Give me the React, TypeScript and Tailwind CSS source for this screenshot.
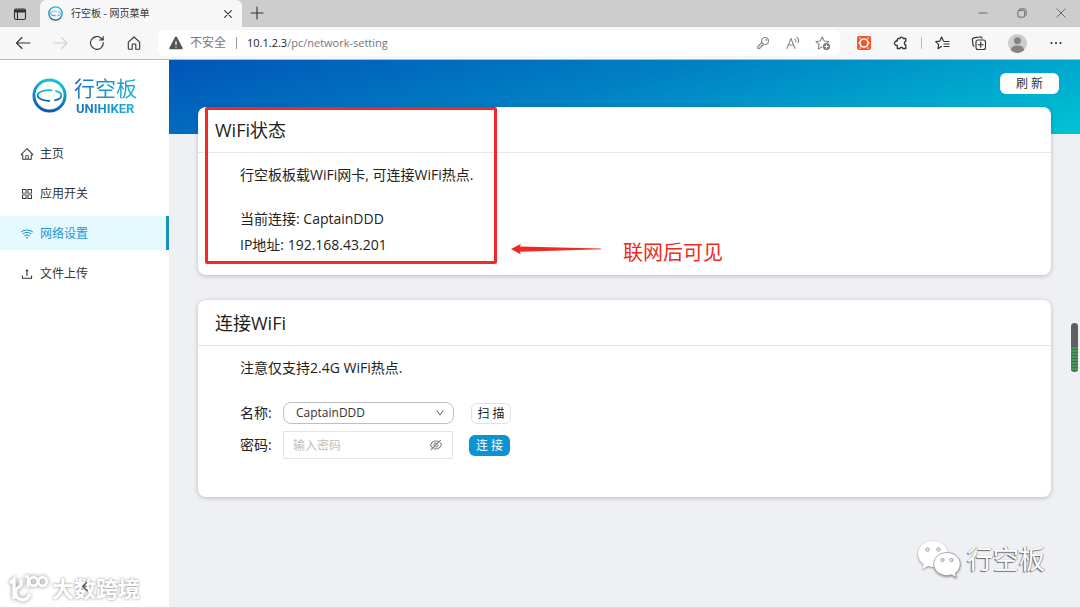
import type { ReactNode } from 'react';
import {
  AiOutlineAppstore,
  AiOutlineDown,
  AiOutlineEyeInvisible,
  AiOutlineHome,
  AiOutlineUpload,
  AiOutlineWifi,
} from 'react-icons/ai';

const menu = [
  { label: '主页', Icon: AiOutlineHome, active: false },
  { label: '应用开关', Icon: AiOutlineAppstore, active: false },
  { label: '网络设置', Icon: AiOutlineWifi, active: true },
  { label: '文件上传', Icon: AiOutlineUpload, active: false },
];

function Stroke({ children, className = 'size-4' }: { children: ReactNode; className?: string }) {
  return (
    <svg
      viewBox="0 0 16 16"
      className={className}
      fill="none"
      stroke="currentColor"
      strokeWidth="1.1"
      strokeLinecap="round"
      strokeLinejoin="round"
      aria-hidden="true"
    >
      {children}
    </svg>
  );
}

function IconButton({ label, className = '', children }: { label: string; className?: string; children: ReactNode }) {
  return (
    <button type="button" aria-label={label} className={`shrink-0 ${className}`}>
      {children}
    </button>
  );
}

function LogoMark({ id, className }: { id: string; className: string }) {
  return (
    <svg viewBox="0 0 36 36" className={className} fill="none" aria-hidden="true">
      <defs>
        <linearGradient id={id} x1="0.6" y1="0" x2="0.4" y2="1">
          <stop offset="0" stopColor="#13c5d6" />
          <stop offset="1" stopColor="#0d57b5" />
        </linearGradient>
      </defs>
      <circle cx="18" cy="18" r="16" stroke={`url(#${id})`} strokeWidth="3" />
      <path
        d="M21 12.600C13 11.500 5.500 14.500 5.800 18c.3 3.600 6.500 5.600 12.700 5.400M24 13.300c4 .9 6.500 2.700 6.200 5-.2 2-3.200 3.900-7.200 4.700"
        stroke={`url(#${id})`}
        strokeWidth="1.8"
      />
    </svg>
  );
}

function TitleBar() {
  return (
    <div className="flex h-[27px] items-end bg-[#cdcdcd] text-[#333]">
      <IconButton label="标签页操作" className="mb-[5px] ml-3">
        <Stroke>
          <rect x="2.500" y="3" width="11" height="10.500" rx="1.500" />
          <path d="M3 4.500h10M3 5.500h10" strokeWidth="2" />
          <path d="M5.500 6v7" />
        </Stroke>
      </IconButton>
      <div className="ml-3 flex h-[27px] w-[202px] items-center rounded-t-md bg-[#f7f7f7] pr-2 pl-2">
        <LogoMark id="tab-logo" className="size-[15px]" />
        <span className="ml-2 flex-1 text-[10px]">行空板 - 网页菜单</span>
        <IconButton label="关闭标签页">
          <Stroke className="size-3">
            <path d="M3.500 3.500l9 9M12.500 3.500l-9 9" strokeWidth="1.500" />
          </Stroke>
        </IconButton>
      </div>
      <IconButton label="新建标签页" className="mb-[6px] ml-[7px]">
        <Stroke>
          <path d="M8 2v12M2 8h12" />
        </Stroke>
      </IconButton>
      <div className="mb-2 ml-auto flex gap-[27px] pr-[13px] text-[#555]">
        <IconButton label="最小化">
          <Stroke className="size-3">
            <path d="M2.500 8h11" />
          </Stroke>
        </IconButton>
        <IconButton label="还原">
          <Stroke className="size-3">
            <rect x="2.500" y="4.500" width="9" height="9" rx="1.500" />
            <path d="M5 2.500h6a2.500 2.500 0 0 1 2.500 2.500v6" />
          </Stroke>
        </IconButton>
        <IconButton label="关闭">
          <Stroke className="size-3">
            <path d="M2.500 2.500l11 11M13.500 2.500l-11 11" />
          </Stroke>
        </IconButton>
      </div>
    </div>
  );
}

function Toolbar() {
  return (
    <div className="flex h-[33px] items-center border-b border-[#b5b9bd] bg-[#f7f7f7] pr-4 pl-[15px] text-[#333]">
      <div className="flex gap-[21px]">
        <IconButton label="后退">
          <Stroke>
            <path d="M15 8H1.500M7 2.500L1.500 8l5.500 5.500" />
          </Stroke>
        </IconButton>
        <IconButton label="前进" className="text-[#d0d0d0]">
          <Stroke>
            <path d="M1.500 8H15M9.500 2.500L15 8l-5.500 5.500" />
          </Stroke>
        </IconButton>
        <IconButton label="刷新页面">
          <Stroke>
            <path d="M14.300 7.500A6.400 6.400 0 1 1 12.500 3.500L14 5M14.200 1.500V5h-3.700" />
          </Stroke>
        </IconButton>
        <IconButton label="主页">
          <Stroke>
            <path d="M2.300 7.200L8 2l5.700 5.200v6.300a.8.8 0 0 1-.8.8H9.800V9.800a.8.800 0 0 0-.8-.8H7a.8.800 0 0 0-.8.800v4.500H3.100a.8.800 0 0 1-.8-.8z" />
          </Stroke>
        </IconButton>
      </div>

      <div className="ml-4 flex h-[26px] flex-1 items-center rounded-md bg-white pr-[9px] pl-2.5">
        <svg viewBox="0 0 16 16" className="size-4 text-[#555]" aria-hidden="true">
          <path d="M8 1.600a1 1 0 0 1 .9.500l5.700 10.600a1 1 0 0 1-.9 1.500H2.300a1 1 0 0 1-.9-1.500L7.100 2.100a1 1 0 0 1 .9-.5z" fill="currentColor" />
          <path d="M8 6v4M8 11.400v1.200" stroke="#fff" strokeWidth="1.200" />
        </svg>
        <span className="ml-1.5 text-xs text-[#777]">不安全</span>
        <span className="mx-2.5 h-3 w-px bg-[#999]" />
        <span className="flex-1 text-[11px] text-[#777]">
          <span className="text-[#222]">10.1.2.3</span>/pc/network-setting
        </span>
        <div className="flex gap-[14px] text-[#888]">
          <IconButton label="密码">
            <Stroke className="size-4">
              <circle cx="10" cy="6" r="3.500" />
              <circle cx="11.200" cy="4.900" r=".4" />
              <path d="M6.800 7.500L2.800 11.500v2h2.100v-1.500h1.500v-1.400h1.200l1-1.300" />
            </Stroke>
          </IconButton>
          <IconButton label="朗读">
            <Stroke>
              <path d="M2 13.500L6 3.500l4 10M3.400 10h5.200M10 4.200c.8.700 1 1.600.7 2.600M12 2.300c1.800 1.500 2 3.500 1.200 5.500" />
            </Stroke>
          </IconButton>
          <IconButton label="收藏">
            <Stroke>
              <path d="M7 12l-3.600 2 .7-4.300L1 6.600l4.300-.6L7.200 2l2 4 4.300.6-1 1" />
              <circle cx="11.500" cy="11.500" r="3.600" fill="#777" stroke="none" />
              <path d="M11.500 9.800v3.400M9.800 11.500h3.400" stroke="#fff" strokeWidth="1" />
            </Stroke>
          </IconButton>
        </div>
      </div>

      <div className="ml-4 flex items-center gap-[21px]">
        <IconButton label="扩展">
          <svg viewBox="0 0 16 16" className="size-4" fill="none" aria-hidden="true">
            <rect x="1" y="1" width="14" height="14" rx="2" fill="#f1572c" />
            <path d="M3 3h2M13 3h-2M3 13h2M13 13h-2M2 8h2M12 8h2" stroke="#ffd9cc" strokeWidth="1.200" />
            <circle cx="8" cy="8" r="4" stroke="#fff" strokeWidth="1.600" />
          </svg>
        </IconButton>
        <div className="flex items-center gap-3">
          <IconButton label="扩展菜单">
            <Stroke>
              <path d="M5.200 3.500h1.600a1.800 1.800 0 0 1 3.500 0h2.500v2.800a1.900 1.900 0 0 0 0 3.700v3.500H9.900a1.600 1.600 0 0 0-3 0H4.300v-3.200a2.200 2.200 0 1 1 0-4.200V4.300z" strokeWidth="1.300" />
            </Stroke>
          </IconButton>
          <span className="h-3 w-px bg-[#bbb]" />
          <IconButton label="收藏夹">
            <Stroke>
              <path d="M7.500 11.500L4 13.700l.7-4.100-3-3 4.100-.5 1.800-4 1.700 3.600M10 6.500h5M10 9h5M10 11.500h5" strokeWidth="1.200" />
            </Stroke>
          </IconButton>
        </div>
        <IconButton label="集锦">
          <Stroke>
            <rect x="5" y="5" width="9.500" height="9.500" rx="2" />
            <path d="M9.750 7.200v5M7.200 9.750h5M3 11.200A2 2 0 0 1 2 9.600L1.400 5a2 2 0 0 1 1.700-2.200l5.500-.9a2 2 0 0 1 2.300 1.300" strokeWidth="1.200" />
          </Stroke>
        </IconButton>
        <IconButton label="个人资料">
          <svg viewBox="0 0 18 18" className="size-[19px]" aria-hidden="true">
            <circle cx="9" cy="9" r="9" fill="#cfcdcb" />
            <circle cx="9" cy="6.300" r="3.300" fill="#858381" />
            <path d="M2.800 15.500c0-3 2.500-4.500 6.200-4.500s6.200 1.500 6.200 4.500A9 9 0 0 1 9 18a9 9 0 0 1-6.200-2.500z" fill="#858381" />
          </svg>
        </IconButton>
        <IconButton label="更多">
          <svg viewBox="0 0 16 16" className="size-4" fill="#333" aria-hidden="true">
            <circle cx="3.500" cy="8" r="1.100" />
            <circle cx="8" cy="8" r="1.100" />
            <circle cx="12.500" cy="8" r="1.100" />
          </svg>
        </IconButton>
      </div>
    </div>
  );
}

function Sidebar() {
  return (
    <aside className="relative w-[169px] shrink-0 bg-white">
      <div className="flex h-[76px] items-start pt-[15px] pl-8">
        <LogoMark id="side-logo" className="mt-[3px] size-[35px]" />
        <div className="ml-[7px] flex flex-col">
          <span className="bg-linear-to-r from-[#1b6fc2] to-[#1cb4d6] bg-clip-text text-[21px] leading-[27px] text-transparent">
            行空板
          </span>
          <span className="bg-linear-to-r from-[#1b6fc2] to-[#1cb4d6] bg-clip-text pl-0.5 font-['Roboto',sans-serif] text-[13px] leading-[13px] font-bold text-transparent">
            UNIHIKER
          </span>
        </div>
      </div>
      <nav className="flex flex-col gap-1.5">
        {menu.map(({ label, Icon, active }) => (
          <a
            key={label}
            href="#"
            className={`flex h-[34px] items-center gap-1.5 pt-px pl-5 text-xs ${
              active ? 'border-r-3 border-[#1890c0] bg-[#e4faff] text-[#2598cf]' : 'text-[#333]'
            }`}
          >
            <Icon className="size-3.5" />
            {label}
          </a>
        ))}
      </nav>

      {/* watermark, with the collapse handle on top */}
      <div className="pointer-events-none absolute bottom-1 left-[9px] flex items-center gap-[3px] text-white">
        <svg
          viewBox="0 0 40 30"
          className="h-[30px] w-10 drop-shadow-[0_0_2px_#888]"
          fill="none"
          stroke="currentColor"
          strokeWidth="2.600"
          aria-hidden="true"
        >
          <path d="M1 10l4-3.500V26" strokeWidth="3.200" />
          <path d="M12 7v6M12 13a7 7 0 1 0 8.500 8" strokeWidth="3.200" />
          <path d="M16 3.500h3V14" />
          <circle cx="24.500" cy="8.500" r="4.200" />
          <circle cx="33.500" cy="8.500" r="4.200" />
        </svg>
        <span className="text-[22px] leading-[26px] font-bold [text-shadow:0_0_3px_#888]">大数跨境</span>
      </div>
      <button type="button" aria-label="收起" className="absolute bottom-3.5 left-[79px] text-[#555]">
        <Stroke className="size-3">
          <path d="M10 2L5 7l6 6M6 7h4" strokeWidth="1.600" />
        </Stroke>
      </button>
    </aside>
  );
}

function Card({ title, className = '', children }: { title: string; className?: string; children: ReactNode }) {
  return (
    <section className={`relative rounded-lg bg-white shadow-[0_1px_5px_rgba(0,0,0,0.22)] ${className}`}>
      <h2 className="flex h-[46px] items-center border-b border-[#e6e7e9] px-[17px] text-lg">{title}</h2>
      <div className="px-[42px] pt-[11px] text-sm leading-[22px]">{children}</div>
    </section>
  );
}

function WifiForm() {
  return (
    <form className="mt-5 flex flex-col gap-1" onSubmit={(e) => e.preventDefault()}>
      <div className="flex h-7 items-center">
        <label htmlFor="ssid" className="w-[43px]">
          名称:
        </label>
        <div className="relative w-[171px]">
          <select
            id="ssid"
            className="block h-[22px] w-full appearance-none rounded-lg border border-[#bfbfbf] bg-white pl-3 text-xs leading-[20px] text-[#333]"
          >
            <option>CaptainDDD</option>
          </select>
          <AiOutlineDown className="pointer-events-none absolute top-1.5 right-[9px] size-2.5 text-[#444]" />
        </div>
        <button type="button" className="ml-[17px] h-[21px] w-10 rounded-md border border-[#e0e0e0] text-xs leading-[19px]">
          扫 描
        </button>
      </div>
      <div className="flex h-7 items-center">
        <label htmlFor="pwd" className="w-[43px]">
          密码:
        </label>
        <div className="relative w-[170px]">
          <input
            id="pwd"
            type="password"
            placeholder="输入密码"
            className="block h-7 w-full border border-[#e4e4e4] pr-8 pl-[9px] text-xs placeholder:text-[#bfbfbf]"
          />
          <AiOutlineEyeInvisible className="absolute top-[7px] right-2.5 size-3.5 text-[#777]" />
        </div>
        <button type="submit" className="ml-4 h-[21px] w-[41px] rounded-md bg-[#0c94d0] text-xs leading-[21px] text-white">
          连 接
        </button>
      </div>
    </form>
  );
}

export default function App() {
  return (
    <div className="relative flex min-h-screen flex-col bg-[#eff0f4] font-['Open_Sans','Noto_Sans_CJK_SC',sans-serif] text-[#222]">
      <header>
        <TitleBar />
        <Toolbar />
      </header>

      <div className="flex flex-1 border-b border-[#d8d9db]">
        <Sidebar />
        <main className="flex flex-1 flex-col bg-[linear-gradient(165deg,#0055b8_0%,#0080c4_45%,#00c4d4_100%)] bg-[length:100%_74px] bg-no-repeat px-[29px] pb-8">
          <div className="-mr-2 flex justify-end py-[13px]">
            <button type="button" className="h-[21px] w-[59px] rounded-md bg-white text-xs leading-[21px] text-[#333]">
              刷 新
            </button>
          </div>

          <Card title="WiFi状态" className="pb-[19px]">
            <p>行空板板载WiFi网卡, 可连接WiFi热点.</p>
            <p className="mt-[22px]">当前连接: CaptainDDD</p>
            <p className="mt-1">IP地址: 192.168.43.201</p>

            {/* red annotation */}
            <div className="pointer-events-none absolute top-0 left-[7px] h-[157px] w-[292px] rounded-xs border-3 border-[#f22a26]" />
            <div className="absolute top-[132px] left-[313px] flex items-start gap-[22px] text-[#ee2a22]">
              <svg viewBox="0 0 90 12" className="mt-1 h-3 w-[90px]" fill="currentColor" aria-hidden="true">
                <path d="M0 6L10 .8 8.800 3.500 L90 5.600v.6L8.800 8.800 10 11.500z" />
              </svg>
              <span className="text-xl leading-[28px]">联网后可见</span>
            </div>
          </Card>

          <Card title="连接WiFi" className="mt-[25px] pb-[38px]">
            <p>注意仅支持2.4G WiFi热点.</p>
            <WifiForm />
          </Card>
        </main>
      </div>

      <div className="absolute top-[323px] right-0.5 h-[49px] w-[7px] overflow-hidden rounded-full bg-[#5d5f61]">
        <div className="mt-6 h-6 bg-[repeating-linear-gradient(#3f9a58_0_2px,#4b6a52_2px_3px)]" />
      </div>

      <div className="pointer-events-none absolute right-[35px] bottom-[30px] flex items-center gap-1.5">
        <svg viewBox="0 0 44 38" className="h-[38px] w-11 drop-shadow-[0_1px_1px_#888]" aria-hidden="true">
          <path
            d="M16 1C7.500 1 1 6.800 1 14c0 4.200 2.200 7.700 5.700 10.200L5.300 29l5.500-2.900c1.700.5 3.400.8 5.200.8 8.500 0 15-5.700 15-12.900S24.500 1 16 1z"
            fill="#fff"
          />
          <path
            d="M30 12.500c-7.500 0-13.300 5-13.300 11.500S22.500 35.500 30 35.500c1.600 0 3.100-.2 4.500-.7l5 2.700-1.300-4.200c3.100-2.200 5-5.500 5-9.300 0-6.500-5.700-11.500-13.200-11.500z"
            fill="#fff"
            stroke="#999"
            strokeWidth=".8"
          />
          <g fill="#eee" stroke="#888" strokeWidth=".8">
            <circle cx="10.500" cy="9.500" r="1.700" />
            <circle cx="21.500" cy="9.500" r="1.700" />
            <circle cx="25.500" cy="20" r="1.600" />
            <circle cx="34.500" cy="20" r="1.600" />
          </g>
        </svg>
        <span className="text-[26px] leading-[36px] text-white [text-shadow:-1px_1px_1px_#666,1px_0_1px_#999]">行空板</span>
      </div>
    </div>
  );
}
